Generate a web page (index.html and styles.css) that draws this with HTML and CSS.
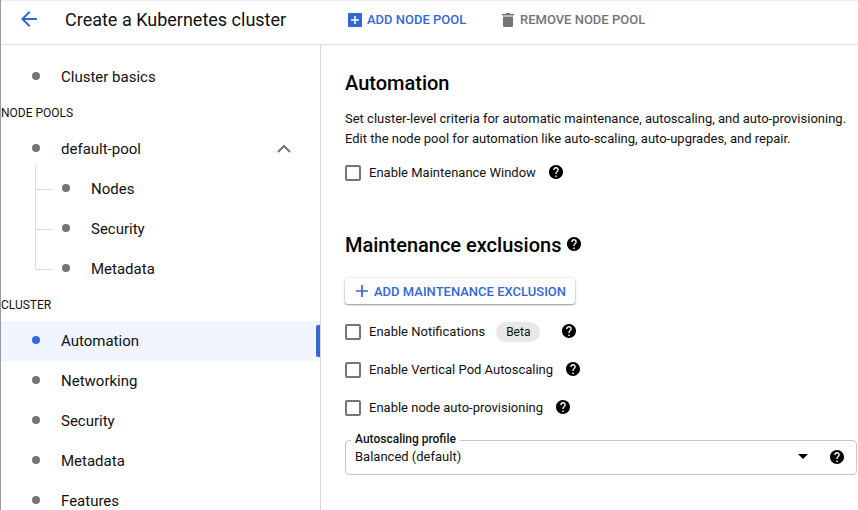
FILE: index.html
```html
<!DOCTYPE html>
<html lang="en">
<head>
<meta charset="utf-8">
<title>Create a Kubernetes cluster</title>
<link rel="stylesheet" href="styles.css">
</head>
<body>
<svg width="0" height="0" class="defs" aria-hidden="true">
  <symbol id="help" viewBox="2 2 20 20"><path d="M12 2C6.48 2 2 6.48 2 12s4.48 10 10 10 10-4.48 10-10S17.52 2 12 2zm1 17h-2v-2h2v2zm2.070-7.750l-.9.920C13.450 12.900 13 13.500 13 15h-2v-.5c0-1.100.450-2.100 1.170-2.830l1.240-1.260c.370-.360.590-.860.590-1.410 0-1.100-.9-2-2-2s-2 .9-2 2H8c0-2.210 1.790-4 4-4s4 1.790 4 4c0 .880-.360 1.680-.930 2.250z" fill="#000" stroke="none"/></symbol>
</svg>
<div class="app">
  <header class="topbar">
    <svg class="back" width="16" height="16" viewBox="4 4 16 16"><path d="M20 11H7.830l5.590-5.590L12 4l-8 8 8 8 1.410-1.410L7.830 13H20v-2z" fill="#3367d6"/></svg>
    <h1 class="title">Create a Kubernetes cluster</h1>
    <button class="action add"><svg width="14" height="14" viewBox="0 0 14 14"><rect width="14" height="14" rx="1" fill="#3367d6"/><path d="M7 3v8M3 7h8" stroke="#fff" stroke-width="1.500"/></svg><span>ADD NODE POOL</span></button>
    <button class="action remove"><svg width="12" height="14" viewBox="0 0 12 14"><path d="M0 1h3.500l.7-1h3.600l.7 1H12v1.500H0zM1 3.500h10V12.500a1.500 1.500 0 0 1-1.500 1.500h-7A1.500 1.500 0 0 1 1 12.500z" fill="#757575"/></svg><span>REMOVE NODE POOL</span></button>
  </header>
  <div class="body">
    <nav class="sidebar">
      <a class="item"><i class="dot"></i><span>Cluster basics</span></a>
      <h2 class="group">NODE POOLS</h2>
      <a class="item"><i class="dot"></i><span>default-pool</span><svg class="chevron" width="14" height="9" viewBox="0 0 14 9"><path d="M1 8l6-6 6 6" fill="none" stroke="#757575" stroke-width="2"/></svg></a>
      <div class="tree">
        <a class="item child"><i class="dot"></i><span>Nodes</span></a>
        <a class="item child"><i class="dot"></i><span>Security</span></a>
        <a class="item child"><i class="dot"></i><span>Metadata</span></a>
      </div>
      <h2 class="group">CLUSTER</h2>
      <a class="item active"><i class="dot"></i><span>Automation</span></a>
      <a class="item"><i class="dot"></i><span>Networking</span></a>
      <a class="item"><i class="dot"></i><span>Security</span></a>
      <a class="item"><i class="dot"></i><span>Metadata</span></a>
      <a class="item"><i class="dot"></i><span>Features</span></a>
    </nav>
    <main class="content">
      <h2 class="heading">Automation</h2>
      <p class="intro">Set cluster-level criteria for automatic maintenance, autoscaling, and auto-provisioning.<br>Edit the node pool for automation like auto-scaling, auto-upgrades, and repair.</p>
      <div class="row window"><i class="box"></i><span>Enable Maintenance Window</span><svg class="help"><use href="#help"/></svg></div>
      <h2 class="heading exclusions"><span>Maintenance exclusions</span><svg class="help"><use href="#help"/></svg></h2>
      <button class="raised"><svg width="12" height="12" viewBox="0 0 12 12"><path d="M6 0v12M0 6h12" stroke="#3367d6" stroke-width="1.700"/></svg><span>ADD MAINTENANCE EXCLUSION</span></button>
      <div class="row"><i class="box"></i><span>Enable Notifications</span><b class="beta">Beta</b><svg class="help wide"><use href="#help"/></svg></div>
      <div class="row"><i class="box"></i><span>Enable Vertical Pod Autoscaling</span><svg class="help"><use href="#help"/></svg></div>
      <div class="row"><i class="box"></i><span>Enable node auto-provisioning</span><svg class="help"><use href="#help"/></svg></div>
      <div class="select">
        <span class="label">Autoscaling profile</span>
        <span class="value">Balanced (default)</span>
        <svg class="caret" width="10" height="5" viewBox="0 0 10 5"><path d="M0 0h10L5 5z" fill="#000"/></svg>
        <svg class="help"><use href="#help"/></svg>
      </div>
    </main>
  </div>
</div>
</body>
</html>
```

FILE: styles.css
```css
* { box-sizing: border-box; }
html, body { margin: 0; height: 100%; overflow: hidden; }
body { background: #fff; color: #111; font: 13px/20px Roboto, sans-serif; }
h1, h2, p { margin: 0; font-weight: 400; }
svg { display: block; flex: none; }
button { border: 0; padding: 0; background: none; font: inherit; display: flex; align-items: center; }
.defs { position: absolute; }

.app { height: 510px; border-left: 1px solid #9a9a9a; display: flex; flex-direction: column; }
.topbar {
  height: 45px; flex: none; display: flex; align-items: center;
  padding: 0 0 5px 20px; border-bottom: 1px solid #dcdcdc;
  background: linear-gradient(#ececec, #fff 2px);
}
.back { margin-top: -1px; }
.title { width: 283px; margin-left: 28px; font-size: 18px; line-height: 24px; white-space: nowrap; }
.action { font-weight: 500; font-size: 13px; white-space: nowrap; }
.add { width: 154px; gap: 5px; color: #3367d6; }
.remove { gap: 6px; color: #757575; }

.body { flex: 1; min-height: 0; display: flex; }
.sidebar { width: 320px; flex: none; padding-top: 12px; border-right: 1px solid #dcdcdc; overflow: hidden; }
.item { position: relative; display: flex; align-items: center; height: 40px; padding-left: 31px; font-size: 15px; }
.dot { width: 8px; height: 8px; margin: -2px 21px 0 0; border-radius: 50%; background: #757575; flex: none; }
.group { height: 32px; font-size: 12px; line-height: 32px; }
.chevron { margin: -1px 29px 0 auto; }
.child { padding-left: 61px; }
.child::before { content: ""; position: absolute; left: 34px; top: -20px; width: 17px; height: 40px; border: solid #dcdcdc; border-width: 0 0 1px 1px; }
.child:first-child::before { top: -4px; height: 24px; }
.active { background: #f0f5ff; }
.active .dot { background: #3367d6; }
.active::after { content: ""; position: absolute; right: 0; top: 4px; width: 4px; height: 32px; border-radius: 2px 0 0 2px; background: #3367d6; }

.content { flex: 1; min-width: 0; padding: 24px 1px 0 24px; }
.heading { height: 28px; font-size: 20px; line-height: 28px; font-weight: 500; color: #000; }
.intro { margin-top: 12px; white-space: nowrap; }
.row { display: flex; align-items: center; height: 38px; white-space: nowrap; }
.row span { margin-top: 2px; }
.window { margin-top: 4px; }
.box { width: 16px; height: 16px; margin: 2px 8px 0 0; border: 2px solid #757575; border-radius: 2px; flex: none; }
.help { width: 14px; height: 14px; margin-left: 13px; }
.exclusions { display: flex; align-items: center; margin-top: 40px; }
.exclusions .help { margin: -2px 0 0 6px; }
.raised {
  width: 230px; height: 26px; margin: 19px 0 8px; padding-left: 11px; gap: 6px;
  border-radius: 3px; background: #fff; color: #3367d6; font-weight: 500; white-space: nowrap;
  box-shadow: 0 1px 2px rgba(0, 0, 0, .4), 0 0 2px rgba(0, 0, 0, .12);
}
.raised span { margin-top: 2px; }
.beta { height: 20px; margin: 2px 0 0 11px; padding: 0 10px; border-radius: 10px; background: #e8e8e8; font-size: 12px; font-weight: 400; }
.wide { margin-left: 22px; }
.select { position: relative; display: flex; align-items: center; height: 35px; margin-top: 14px; padding: 0 12px 2px 9px; border: 1px solid #c6c6c6; border-radius: 4px; }
.label { position: absolute; left: 5px; top: -12px; padding: 0 4px; background: #fff; font-size: 12px; font-weight: 500; line-height: 20px; }
.value { flex: 1; }
.select .help { margin-left: 22px; }
```
